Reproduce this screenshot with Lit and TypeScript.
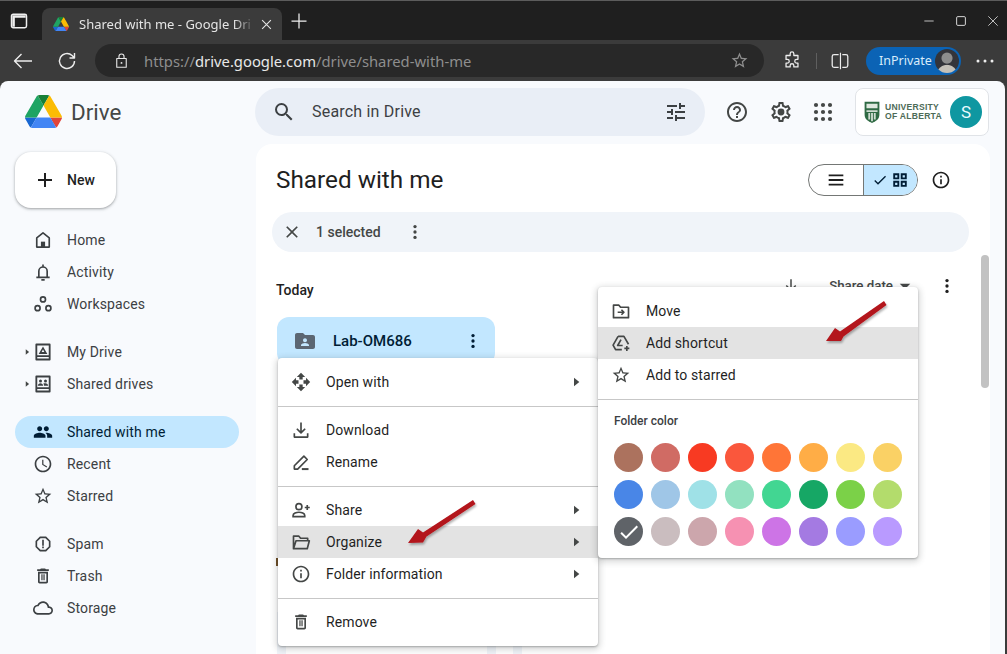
import { LitElement, html, svg, css, nothing } from 'lit';
import { customElement } from 'lit/decorators.js';

const line = (d: string, w = 2) => svg`<path d=${d} fill="none" stroke="currentColor" stroke-width=${w} stroke-linejoin="round"/>`;
const fill = (d: string) => svg`<path d=${d}/>`;

const ICONS: Record<string, unknown> = {
  search: fill('M15.5 14h-.79l-.28-.27A6.471 6.471 0 0 0 16 9.5 6.5 6.5 0 1 0 9.5 16c1.61 0 3.09-.59 4.23-1.57l.27.28v.79l5 4.99L20.49 19l-4.99-5zm-6 0C7.01 14 5 11.99 5 9.5S7.01 5 9.5 5 14 7.01 14 9.5 11.99 14 9.5 14z'),
  tune: fill('M3 17v2h6v-2H3zM3 5v2h10V5H3zm10 16v-2h8v-2h-8v-2h-2v6h2zM7 9v2H3v2h4v2h2V9H7zm14 4v-2H11v2h10zm-6-4h2V7h4V5h-4V3h-2v6z'),
  help: fill('M11 18h2v-2h-2v2zm1-16C6.48 2 2 6.48 2 12s4.48 10 10 10 10-4.48 10-10S17.52 2 12 2zm0 18c-4.41 0-8-3.59-8-8s3.59-8 8-8 8 3.59 8 8-3.59 8-8 8zm0-14c-2.21 0-4 1.79-4 4h2c0-1.1.9-2 2-2s2 .9 2 2c0 2-3 1.75-3 5h2c0-2.25 3-2.5 3-5 0-2.21-1.79-4-4-4z'),
  gear: svg`${fill('M19.43 12.98c.04-.32.07-.64.07-.98 0-.34-.03-.66-.07-.98l2.11-1.65c.19-.15.24-.42.12-.64l-2-3.46c-.09-.16-.26-.25-.44-.25-.06 0-.12.01-.17.03l-2.49 1c-.52-.4-1.08-.73-1.69-.98l-.38-2.65C14.46 2.18 14.25 2 14 2h-4c-.25 0-.46.18-.49.42l-.38 2.65c-.61.25-1.17.59-1.69.98l-2.49-1c-.06-.02-.12-.03-.18-.03-.17 0-.34.09-.43.25l-2 3.46c-.13.22-.07.49.12.64l2.11 1.65c-.04.32-.07.65-.07.98 0 .33.03.66.07.98l-2.11 1.65c-.19.15-.24.42-.12.64l2 3.46c.09.16.26.25.44.25.06 0 .12-.01.17-.03l2.49-1c.52.4 1.08.73 1.69.98l.38 2.65c.03.24.24.42.49.42h4c.25 0 .46-.18.49-.42l.38-2.65c.61-.25 1.17-.59 1.69-.98l2.49 1c.06.02.12.03.18.03.17 0 .34-.09.43-.25l2-3.46c.12-.22.07-.49-.12-.64l-2.11-1.65zm-1.98-1.71c.04.31.05.52.05.73 0 .21-.02.43-.05.73l-.14 1.13.89.7 1.08.84-.7 1.21-1.27-.51-1.04-.42-.9.68c-.43.32-.84.56-1.25.73l-1.06.43-.16 1.13-.2 1.35h-1.4l-.19-1.35-.16-1.13-1.06-.43c-.43-.18-.83-.41-1.23-.71l-.91-.7-1.06.43-1.27.51-.7-1.21 1.08-.84.89-.7-.14-1.13c-.03-.31-.05-.54-.05-.74s.02-.43.05-.73l.14-1.13-.89-.7-1.08-.84.7-1.21 1.27.51 1.04.42.9-.68c.43-.32.84-.56 1.25-.73l1.06-.43.16-1.13.2-1.35h1.39l.19 1.35.16 1.13 1.06.43c.43.18.83.41 1.23.71l.91.7 1.06-.43 1.27-.51.7 1.21-1.07.85-.89.7.14 1.13z')}<circle cx="12" cy="12" r="3.4"/>`,
  apps: svg`${[5, 12, 19].map((y) => [5, 12, 19].map((x) => svg`<circle cx=${x} cy=${y} r="2.1"/>`))}`,
  info: fill('M11 7h2v2h-2zm0 4h2v6h-2zm1-9C6.48 2 2 6.48 2 12s4.48 10 10 10 10-4.48 10-10S17.52 2 12 2zm0 18c-4.41 0-8-3.59-8-8s3.59-8 8-8 8 3.59 8 8-3.59 8-8 8z'),
  plus: fill('M19 13h-6v6h-2v-6H5v-2h6V5h2v6h6z'),
  home: svg`${line('M12 3.5 4.5 9.5V20.5h15V9.5z')}<rect x="9.5" y="14" width="5" height="6.5"/>`,
  bell: svg`${line('M7 18v-7a5 5 0 0 1 10 0v7M4 18.5h16M12 3v3M10 21.5h4')}`,
  workspaces: svg`<g fill="none" stroke="currentColor" stroke-width="2"><circle cx="12" cy="6.5" r="3"/><circle cx="5.5" cy="17" r="3"/><circle cx="18.5" cy="17" r="3"/></g>`,
  mydrive: svg`${line('M4 3h16v18H4zM4 17h16', 2.2)}<path d="M12 5.5 6.8 14.5h10.4zM12 9l1.6 3h-3.2z" fill-rule="evenodd"/>`,
  shareddrive: svg`${line('M4 3h16v18H4zM4 17h16', 2.2)}<circle cx="9" cy="8.5" r="1.8"/><circle cx="15" cy="8.5" r="1.8"/><path d="M5.8 14c0-2 1.6-3 3.2-3s3.2 1 3.2 3zM13.2 14c0-1.1-.3-2-.8-2.6.7-.3 1.6-.4 2.6-.4 1.6 0 3.2 1 3.2 3z"/>`,
  people: fill('M16 11c1.66 0 2.99-1.34 2.99-3S17.66 5 16 5c-1.66 0-3 1.34-3 3s1.34 3 3 3zm-8 0c1.66 0 2.99-1.34 2.99-3S9.66 5 8 5C6.34 5 5 6.34 5 8s1.34 3 3 3zm0 2c-2.33 0-7 1.17-7 3.5V19h14v-2.5c0-2.33-4.67-3.5-7-3.5zm8 0c-.29 0-.62.02-.97.05 1.16.84 1.97 1.97 1.97 3.45V19h6v-2.5c0-2.33-4.67-3.5-7-3.5z'),
  clock: fill('M11.99 2C6.47 2 2 6.48 2 12s4.47 10 9.99 10C17.52 22 22 17.52 22 12S17.52 2 11.99 2zM12 20c-4.42 0-8-3.58-8-8s3.58-8 8-8 8 3.58 8 8-3.58 8-8 8zm.5-13H11v6l5.25 3.15.75-1.23-4.5-2.67z'),
  star: fill('M22 9.24l-7.19-.62L12 2 9.19 8.63 2 9.24l5.46 4.73L5.82 21 12 17.27 18.18 21l-1.63-7.03L22 9.24zM12 15.4l-3.76 2.27 1-4.28-3.32-2.88 4.38-.38L12 6.1l1.71 4.04 4.38.38-3.32 2.88 1 4.28L12 15.4z'),
  spam: fill('M15.73 3H8.27L3 8.27v7.46L8.27 21h7.46L21 15.73V8.27L15.73 3zM19 14.9L14.9 19H9.1L5 14.9V9.1L9.1 5h5.8L19 9.1v5.8zM11 7h2v7h-2zM11 15h2v2h-2z'),
  trash: fill('M16 9v10H8V9h8m-1.5-6h-5l-1 1H5v2h14V4h-3.5l-1-1zM18 7H6v12c0 1.1.9 2 2 2h8c1.1 0 2-.9 2-2V7zM10 10h1.5v7H10zM12.5 10H14v7h-1.5z'),
  cloud: fill('M19.35 10.04C18.67 6.59 15.64 4 12 4 9.11 4 6.6 5.64 5.35 8.04 2.34 8.36 0 10.91 0 14c0 3.31 2.69 6 6 6h13c2.76 0 5-2.24 5-5 0-2.64-2.05-4.78-4.65-4.96zM19 18H6c-2.21 0-4-1.79-4-4 0-2.05 1.53-3.76 3.56-3.97l1.07-.11.5-.95C8.08 7.14 9.94 6 12 6c2.62 0 4.88 1.86 5.39 4.43l.3 1.5 1.53.11c1.56.1 2.78 1.41 2.78 2.96 0 1.65-1.35 3-3 3z'),
  openwith: fill('M10 9h4V6h3l-5-5-5 5h3v3zm-1 1H6V7l-5 5 5 5v-3h3v-4zm14 2l-5-5v3h-3v4h3v3l5-5zm-9 3h-4v3H7l5 5 5-5h-3v-3z'),
  download: svg`${line('M12 3v12M7 10.5l5 5 5-5M4 16v4.5h16V16')}`,
  rename: svg`${line('M4 20.5v-4L15.5 5l4 4L8 20.5z')}${line('M13 20.5h8', 2.4)}`,
  share: svg`<g fill="none" stroke="currentColor" stroke-width="2"><circle cx="9.5" cy="8" r="3.6"/><path d="M2.5 20v-1.5c0-2.4 4-3.8 7-3.8s7 1.4 7 3.8V20z"/><path d="M19.5 6v6M16.5 9h6"/></g>`,
  organize: svg`${line('M3 20V5h6.5l2 2.5H20v3M3 20l3-9.5h16L19.5 20z')}`,
  move: svg`${line('M3 5h6.5l2 2.5H21V20H3zM8 13.5h7M12.5 10.5l3 3-3 3')}`,
  shortcut: svg`${line('M8.5 4h7l5.5 9.5M8.5 4 2.5 14.5l3 5.5H13M12 8l-4 7h6')}${line('M19 15.5v6M16 18.5h6')}`,
  menu: fill('M4 6h16v2H4zM4 11h16v2H4zM4 16h16v2H4z'),
  check: fill('M9 16.2 4.8 12l-1.4 1.4L9 19 21 7l-1.4-1.4z'),
  grid: svg`<path fill-rule="evenodd" d="M3 3h8v8H3zM5.5 5.5v3h3v-3zM13 3h8v8h-8zM15.5 5.5v3h3v-3zM3 13h8v8H3zM5.5 15.5v3h3v-3zM13 13h8v8h-8zM15.5 15.5v3h3v-3z"/>`,
  close: fill('M19 6.41 17.59 5 12 10.59 6.41 5 5 6.41 10.59 12 5 17.59 6.41 19 12 13.41 17.59 19 19 17.59 13.41 12z'),
  kebab: svg`<circle cx="12" cy="5.5" r="2"/><circle cx="12" cy="12" r="2"/><circle cx="12" cy="18.5" r="2"/>`,
  folder: fill('M20 6h-8l-2-2H4c-1.1 0-1.99.9-1.99 2L2 18c0 1.1.9 2 2 2h16c1.1 0 2-.9 2-2V8c0-1.1-.9-2-2-2zm-8 3.2c1.1 0 2 .9 2 2s-.9 2-2 2-2-.9-2-2 .9-2 2-2zm4 7.8H8v-1c0-1.33 2.67-2 4-2s4 .67 4 2v1z'),
  sort: fill('M11 3h2v12.2l4.6-4.6L19 12l-7 7-7-7 1.4-1.4 4.6 4.6z'),
  back: svg`${line('M21 12H3.5M10.5 5l-7 7 7 7', 1.4)}`,
  reload: svg`${line('M19.5 12a7.5 7.5 0 1 1-2.4-5.5L19.5 9M19.5 4v5h-5', 1.4)}`,
  lock: svg`${line('M6 9.5h12V20.5H6zM8.8 9.5V7a3.2 3.2 0 0 1 6.4 0v2.5', 1.4)}<circle cx="12" cy="15" r="1.2"/>`,
  ext: svg`${line('M10 4a2 2 0 0 1 4 0v2h4.5v4.2h-1.5a2 2 0 0 0 0 4h1.5v4.3H14v-1.5a2 2 0 0 0-4 0v1.5H5.5v-4.2h1.5a2 2 0 0 0 0-4H5.5V6H10z', 1.4)}`,
  split: svg`${line('M10.5 5H5.5a2 2 0 0 0-2 2v10a2 2 0 0 0 2 2h5M14.5 5H18.5a2 2 0 0 1 2 2v10a2 2 0 0 1-2 2h-4', 1.4)}${line('M12.5 3v18', 1.3)}`,
  tabs: svg`<path d="M5 4h14a2 2 0 0 1 2 2v12a2 2 0 0 1-2 2H5a2 2 0 0 1-2-2V6a2 2 0 0 1 2-2z" fill="none" stroke="currentColor" stroke-width="1.8"/><path d="M4 5h16v3H7V19H4z"/>`,
  newtab: svg`${line('M12 3v18M3 12h18', 1.5)}`,
  tabclose: svg`${line('M5 5l14 14M19 5 5 19', 1.7)}`,
  minimize: svg`${line('M4 12h16', 1.3)}`,
  restore: svg`<rect x="4.5" y="4.5" width="15" height="15" rx="2" fill="none" stroke="currentColor" stroke-width="1.5"/>`,
  winclose: svg`${line('M4 4l16 16M20 4 4 20', 1.3)}`,
  caret: svg`<path d="M9 5.5 17 12l-8 6.5z"/>`,
  dropdown: svg`<path d="M5 9h14l-7 7z"/>`,
  dots: svg`<circle cx="5" cy="12" r="1.5"/><circle cx="12" cy="12" r="1.5"/><circle cx="19" cy="12" r="1.5"/>`,
};

const icon = (name: string, size = 20) => html`<svg class="ic" width=${size} height=${size} viewBox="0 0 24 24" fill="currentColor">${ICONS[name]}</svg>`;

const driveLogo = (size: number) => html`<svg width=${size} height=${size * 0.894} viewBox="0 0 87.3 78">
  <path d="m6.6 66.85 3.85 6.65c.8 1.4 1.95 2.5 3.3 3.3l13.75-23.8h-27.5c0 1.55.4 3.1 1.2 4.5z" fill="#1967d2"/>
  <path d="m43.65 25-13.75-23.8c-1.35.8-2.5 1.9-3.3 3.3l-25.4 44a9.06 9.06 0 0 0 -1.2 4.5h27.5z" fill="#1fa463"/>
  <path d="m73.55 76.8c1.35-.8 2.5-1.9 3.3-3.3l1.6-2.75 7.65-13.25c.8-1.4 1.2-2.95 1.2-4.5h-27.502l5.852 11.5z" fill="#e0453a"/>
  <path d="m43.65 25 13.75-23.8c-1.35-.8-2.9-1.2-4.5-1.2h-18.5c-1.6 0-3.15.45-4.5 1.2z" fill="#188038"/>
  <path d="m59.8 53h-32.3l-13.75 23.8c1.35.8 2.9 1.2 4.5 1.2h50.8c1.6 0 3.15-.45 4.5-1.2z" fill="#4285f4"/>
  <path d="m73.4 26.5-12.7-22c-.8-1.4-1.95-2.5-3.3-3.3l-13.75 23.8 16.15 28h27.45c0-1.55-.4-3.1-1.2-4.5z" fill="#fbbc04"/>
</svg>`;

type MenuRow = { icon: string; label: string; sub?: boolean; hover?: boolean } | null;

const NAV: { icon: string; label: string; expand?: boolean; active?: boolean }[][] = [
  [{ icon: 'home', label: 'Home' }, { icon: 'bell', label: 'Activity' }, { icon: 'workspaces', label: 'Workspaces' }],
  [{ icon: 'mydrive', label: 'My Drive', expand: true }, { icon: 'shareddrive', label: 'Shared drives', expand: true }],
  [{ icon: 'people', label: 'Shared with me', active: true }, { icon: 'clock', label: 'Recent' }, { icon: 'star', label: 'Starred' }],
  [{ icon: 'spam', label: 'Spam' }, { icon: 'trash', label: 'Trash' }, { icon: 'cloud', label: 'Storage' }],
];

const MAIN_MENU: MenuRow[] = [
  { icon: 'openwith', label: 'Open with', sub: true },
  null,
  { icon: 'download', label: 'Download' },
  { icon: 'rename', label: 'Rename' },
  null,
  { icon: 'share', label: 'Share', sub: true },
  { icon: 'organize', label: 'Organize', sub: true, hover: true },
  { icon: 'info', label: 'Folder information', sub: true },
  null,
  { icon: 'trash', label: 'Remove' },
];

const SUB_MENU: MenuRow[] = [
  { icon: 'move', label: 'Move' },
  { icon: 'shortcut', label: 'Add shortcut', hover: true },
  { icon: 'star', label: 'Add to starred' },
  null,
];

const SWATCHES = [
  '#ac725e', '#d06b64', '#f83a22', '#fa573c', '#ff7537', '#ffad46', '#fbe983', '#fad165',
  '#4986e7', '#9fc6e7', '#9fe1e7', '#92e1c0', '#42d692', '#16a765', '#7bd148', '#b3dc6c',
  '#5f6368', '#cabdbf', '#cca6ac', '#f691b2', '#cd74e6', '#a47ae2', '#9a9cff', '#b99aff',
];

@customElement('app-root')
export class AppRoot extends LitElement {
  static styles = css`
    :host {
      display: block;
      position: relative;
      width: 1007px;
      height: 654px;
      overflow: hidden;
      background: #3b3b3b;
      font-family: Roboto, "Liberation Sans", sans-serif;
      font-size: 14px;
      color: #3c4043;
    }
    .ic { display: block; flex-shrink: 0; }

    .titlebar {
      display: flex;
      align-items: flex-end;
      height: 39px;
      border-top: 1px solid #5c5c5c;
      background: #1f1f1f;
      padding-left: 7px;
      color: #f0f0f0;
      font-family: "Noto Sans", sans-serif;
    }
    .tab-toggle { display: flex; justify-content: center; align-self: center; margin-top: 1px; margin-right: 11px; width: 24px; }
    .tab {
      display: flex;
      align-items: center;
      width: 240px;
      height: 32px;
      box-sizing: border-box;
      padding-left: 11px;
      background: #3b3b3b;
      border-radius: 8px 8px 0 0;
      color: #e4e4e4;
      font-size: 13px;
    }
    .tab-title {
      width: 176px;
      margin-left: 10px;
      white-space: nowrap;
      -webkit-mask-image: linear-gradient(90deg, #000 88%, transparent);
      mask-image: linear-gradient(90deg, #000 88%, transparent);
    }
    .tab-x { margin-left: 4px; }
    .newtab { align-self: center; margin: 0 0 0 7px; }
    .winbtns { display: flex; align-items: center; align-self: center; gap: 18px; margin-left: auto; margin-right: 7px; }

    .toolbar {
      display: flex;
      align-items: center;
      height: 41px;
      padding: 0 10px 0 11px;
      color: #ededed;
      font-family: "Noto Sans", sans-serif;
    }
    .address {
      display: flex;
      align-items: center;
      width: 669px;
      height: 33px;
      margin-left: 16px;
      padding: 0 15px 0 17px;
      box-sizing: border-box;
      border-radius: 17px;
      background: #282828;
      font-size: 14.8px;
      color: #8e8e8e;
    }
    .address .lock { color: #e8e8e8; }
    .address .url { margin-left: 13px; white-space: nowrap; }
    .address b { font-weight: 400; color: #e8e8e8; }
    .address .fav { margin-left: auto; color: #8e8e8e; }
    .tdiv { width: 1px; height: 16px; background: #5f5f5f; margin: 0 12px 0 13px; }
    .private {
      display: flex;
      align-items: center;
      justify-content: space-between;
      width: 95px;
      height: 28px;
      margin: 0 12px 0 15px;
      padding: 0 2px 0 13px;
      box-sizing: border-box;
      border-radius: 14px;
      background: #0b63b5;
      font-size: 12.5px;
      color: #d9ecfb;
    }
    .avatar {
      width: 24px;
      height: 24px;
      border-radius: 50%;
      background: radial-gradient(circle at 50% 38%, #8d8d8d 0 5px, transparent 6px),
        radial-gradient(circle at 50% 110%, #c4c0b8 0 10px, transparent 11px), #33343a;
    }

    .page {
      width: 1005px;
      height: 573px;
      border-radius: 8px 8px 0 0;
      background: #f8fafd;
      overflow: hidden;
    }
    .header { display: flex; align-items: flex-start; height: 63px; padding-top: 7px; box-sizing: border-box; }
    .brand { display: flex; align-items: center; gap: 9px; width: 255px; padding: 7px 0 0 25px; box-sizing: border-box; font-size: 22.4px; color: #444746; }
    .search {
      display: flex;
      align-items: center;
      width: 450px;
      height: 48px;
      padding: 0 17px;
      box-sizing: border-box;
      border-radius: 24px;
      background: #e9eef6;
      font-size: 16px;
      letter-spacing: 0.2px;
      color: #3c4043;
    }
    .search span { margin: 0 0 2px 16px; }
    .search .ic:last-child { margin-left: auto; }
    .actions { display: flex; align-items: center; height: 48px; color: #444746; }
    .account {
      display: flex;
      align-items: center;
      justify-content: space-between;
      width: 134px;
      height: 48px;
      margin-left: 20px;
      padding: 0 6px 0 7px;
      box-sizing: border-box;
      border: 1px solid #e0e3e7;
      border-radius: 8px;
      background: #fff;
    }
    .uni { display: flex; align-items: center; gap: 4px; }
    .uni-text { font-family: "Liberation Sans", sans-serif; font-size: 8.6px; line-height: 9px; font-weight: 700; color: #4d6b57; letter-spacing: 0.25px; white-space: nowrap; }
    .initial {
      display: flex;
      align-items: center;
      justify-content: center;
      width: 32px;
      height: 32px;
      border-radius: 50%;
      background: #0f97a1;
      color: #e9fbff;
      font-size: 17px;
    }

    .body { display: flex; height: 510px; }
    .sidebar { width: 256px; padding: 8px 0 0 15px; box-sizing: border-box; flex-shrink: 0; }
    .new {
      display: flex;
      align-items: center;
      width: 101px;
      height: 56px;
      padding-left: 18px;
      box-sizing: border-box;
      border-radius: 16px;
      background: #fff;
      box-shadow: 0 1px 2px rgba(60, 64, 67, 0.3), 0 1px 3px 1px rgba(60, 64, 67, 0.15);
      font-weight: 500;
      color: #1f1f1f;
    }
    .new span { margin-left: 10px; }
    .nav { margin-top: 16px; display: flex; flex-direction: column; gap: 16px; }
    .nav-item {
      display: grid;
      grid-template-columns: 18px 20px 1fr;
      align-items: center;
      width: 224px;
      height: 32px;
      border-radius: 16px;
      letter-spacing: 0.15px;
    }
    .nav-item.active { background: #c2e7ff; color: #001d35; }
    .nav-item .label { margin-left: 14px; }
    .expander { justify-self: end; margin-right: 1px; color: #444746; }

    .main {
      position: relative;
      flex: 1;
      margin-right: 15px;
      border-radius: 16px 16px 0 0;
      background: #fff;
      overflow: hidden;
    }
    .head-row { display: flex; align-items: center; height: 68px; padding: 4px 0 0 20px; box-sizing: border-box; }
    .head-row h1 { margin: 0 0 2px; font-weight: 400; font-size: 24.3px; color: #1f1f1f; }
    .toggle { display: flex; margin-left: auto; height: 32px; box-sizing: border-box; border: 1px solid #747775; border-radius: 16px; overflow: hidden; color: #1f1f1f; }
    .toggle div { display: flex; align-items: center; justify-content: center; height: 100%; width: 54px; box-sizing: border-box; }
    .toggle .grid { gap: 3px; background: #c2e7ff; border-left: 1px solid #747775; color: #001d35; }
    .head-row .inf { margin: 0 39px 0 13px; color: #1f1f1f; }
    .selbar {
      display: flex;
      align-items: center;
      width: 697px;
      height: 40px;
      margin-left: 16px;
      padding-left: 10px;
      box-sizing: border-box;
      border-radius: 20px;
      background: #f0f4f9;
      color: #444746;
    }
    .selbar span { margin-left: 14px; font-weight: 500; }
    .selbar .ic:last-child { margin-left: 24px; }
    .section { display: flex; align-items: center; height: 36px; margin: 20px 0 0 20px; font-weight: 500; color: #1f1f1f; }
    .sort { display: flex; align-items: center; margin-left: auto; margin-right: 33px; margin-top: -9px; color: #444746; font-size: 13.3px; font-weight: 500; }
    .sort span { margin: 0 3px 0 29px; }
    .sort .last { margin-left: 23px; color: #1f1f1f; }
    .folder {
      display: flex;
      align-items: center;
      width: 218px;
      height: 48px;
      margin: 9px 0 0 21px;
      padding: 0 12px 0 16px;
      box-sizing: border-box;
      border-radius: 12px;
      background: #c2e7ff;
      color: #001d35;
      font-size: 15px;
      font-weight: 500;
    }
    .folder span { margin-left: 16px; }
    .folder .kebab { margin-left: auto; }
    .folder .fic { color: #5b6672; }
    .cards { display: flex; gap: 17px; margin: 247px 0 0 21px; }
    .card { width: 219px; height: 80px; padding: 0 9px; box-sizing: border-box; background: #f0f4f9; }
    .card.partial { width: 78px; padding-right: 0; }
    .card div { height: 100%; background: #fff; }
    .scroll { position: absolute; top: 111px; left: 725px; width: 8px; height: 133px; border-radius: 4px; background: #c2c2c2; }

    .menu {
      position: absolute;
      width: 320px;
      padding: 8px 0;
      box-sizing: border-box;
      border-radius: 4px;
      background: #fff;
      color: #1f1f1f;
      box-shadow: 0 2px 6px 2px rgba(60, 64, 67, 0.2), 0 1px 2px rgba(60, 64, 67, 0.35);
    }
    .menu.left { left: 278px; top: 358px; }
    .menu.right { left: 598px; top: 287px; height: 271px; }
    .row { display: flex; align-items: center; height: 32px; padding: 0 14px 0 13px; color: #3c4043; letter-spacing: 0.1px; }
    .row.hover { background: #e3e3e3; }
    .row .ic:first-child { color: #444746; }
    .row span { margin-left: 15px; color: #1f1f1f; }
    .row .sub { margin-left: auto; color: #444746; }
    .sep { height: 1px; margin: 8px 0 7px; background: #c7c7c7; }
    .color-label { height: 16px; margin: 13px 0 0 16px; font-size: 12px; line-height: 16px; font-weight: 500; color: #3c4043; }
    .swatches { display: grid; grid-template-columns: repeat(8, 29px); gap: 8px; margin: 14px 0 0 16px; }
    .swatch { display: flex; align-items: center; justify-content: center; width: 29px; height: 29px; border-radius: 50%; color: #fff; }

    .sliver { position: absolute; left: 276px; top: 558px; width: 2px; height: 8px; background: #6b4a20; }
    .arrows { position: absolute; left: 0; top: 0; pointer-events: none; }
  `;

  private _menuRows(rows: MenuRow[]) {
    return rows.map((r) =>
      r
        ? html`<div class="row ${r.hover ? 'hover' : ''}">
            ${icon(r.icon)}
            <span>${r.label}</span>
            ${r.sub ? html`<div class="sub">${icon('caret', 16)}</div>` : nothing}
          </div>`
        : html`<div class="sep"></div>`
    );
  }

  private _browser() {
    return html`
      <div class="titlebar">
        <div class="tab-toggle">${icon('tabs', 20)}</div>
        <div class="tab">
          ${driveLogo(16)}
          <div class="tab-title">Shared with me - Google Dri</div>
          <div class="tab-x">${icon('tabclose', 15)}</div>
        </div>
        <div class="newtab">${icon('newtab', 20)}</div>
        <div class="winbtns">
          ${icon('minimize', 14)}${icon('restore', 14)}${icon('winclose', 14)}
        </div>
      </div>
      <div class="toolbar">
        ${icon('back', 24)}
        <div style="width:20px"></div>
        ${icon('reload', 24)}
        <div class="address">
          <div class="lock">${icon('lock', 19)}</div>
          <div class="url">https://<b>drive.google.com</b>/drive/shared-with-me</div>
          <div class="fav">${icon('star', 19)}</div>
        </div>
        <div style="width:17px"></div>
        ${icon('ext', 22)}
        <div class="tdiv"></div>
        ${icon('split', 22)}
        <div class="private"><span>InPrivate</span><div class="avatar"></div></div>
        ${icon('dots', 24)}
      </div>
    `;
  }

  private _header() {
    return html`
      <div class="header">
        <div class="brand">${driveLogo(37)}<span>Drive</span></div>
        <div class="search">
          ${icon('search', 24)}<span>Search in Drive</span>${icon('tune', 24)}
        </div>
        <div class="actions">
          <div style="width:20px"></div>
          ${icon('help', 24)}
          <div style="width:20px"></div>
          ${icon('gear', 24)}
          <div style="width:18px"></div>
          ${icon('apps', 24)}
          <div class="account">
            <div class="uni">
              <svg width="18" height="24" viewBox="0 0 18 26">
                <path d="M1 2h16v14c0 5-4 7-8 9-4-2-8-4-8-9z" fill="#2f6a44"/>
                <path d="M3 4h12v5H3z" fill="#dfe8df"/>
                <path d="M3 11h12v2H3zM5 14h2v7H5zM8 14h2v9H8zM11 14h2v7h-2z" fill="#cfdcd1"/>
              </svg>
              <div class="uni-text">UNIVERSITY<br />OF ALBERTA</div>
            </div>
            <div class="initial">S</div>
          </div>
        </div>
      </div>
    `;
  }

  private _sidebar() {
    return html`
      <div class="sidebar">
        <div class="new">${icon('plus', 24)}<span>New</span></div>
        <div class="nav">
          ${NAV.map(
            (group) => html`<div>
              ${group.map(
                (n) => html`<div class="nav-item ${n.active ? 'active' : ''}">
                  ${n.expand ? html`<div class="expander">${icon('caret', 10)}</div>` : html`<div></div>`}
                  ${icon(n.icon)}
                  <div class="label">${n.label}</div>
                </div>`
              )}
            </div>`
          )}
        </div>
      </div>
    `;
  }

  private _main() {
    return html`
      <div class="main">
        <div class="head-row">
          <h1>Shared with me</h1>
          <div class="toggle">
            <div>${icon('menu', 22)}</div>
            <div class="grid">${icon('check', 16)}${icon('grid', 18)}</div>
          </div>
          <div class="inf">${icon('info', 20)}</div>
        </div>
        <div class="selbar">${icon('close', 20)}<span>1 selected</span>${icon('kebab', 20)}</div>
        <div class="section">
          Today
          <div class="sort">
            ${icon('sort', 18)}<span>Share date</span>${icon('dropdown', 18)}
            <div class="last">${icon('kebab', 20)}</div>
          </div>
        </div>
        <div class="folder">
          <div class="fic">${icon('folder', 24)}</div>
          <span>Lab-OM686</span>
          <div class="kebab">${icon('kebab', 20)}</div>
        </div>
        <div class="cards">
          <div class="card"><div></div></div>
          <div class="card partial"><div></div></div>
        </div>
        <div class="scroll"></div>
      </div>
    `;
  }

  render() {
    return html`
      ${this._browser()}
      <div class="page">
        ${this._header()}
        <div class="body">${this._sidebar()}${this._main()}</div>
      </div>
      <div class="sliver"></div>
      <div class="menu left">${this._menuRows(MAIN_MENU)}</div>
      <div class="menu right">
        ${this._menuRows(SUB_MENU)}
        <div class="color-label">Folder color</div>
        <div class="swatches">
          ${SWATCHES.map(
            (c, i) => html`<div class="swatch" style="background:${c}">${i === 16 ? icon('check', 24) : nothing}</div>`
          )}
        </div>
      </div>
      <svg class="arrows" width="1007" height="654" viewBox="0 0 1007 654">
        <defs>
          <filter id="sh" x="-20%" y="-20%" width="140%" height="140%">
            <feDropShadow dx="1" dy="2" stdDeviation="1.2" flood-color="#000" flood-opacity="0.3" />
          </filter>
        </defs>
        <g fill="#b3141b" filter="url(#sh)">
          <path d="M408 543 418 529 423 532.5 473 500 475.5 504 426.5 536.5 423 542.5z" />
          <path d="M826 341 835 328 840 331.5 884 301 886.5 305 843.5 336.5 841 341z" />
        </g>
      </svg>
    `;
  }
}
